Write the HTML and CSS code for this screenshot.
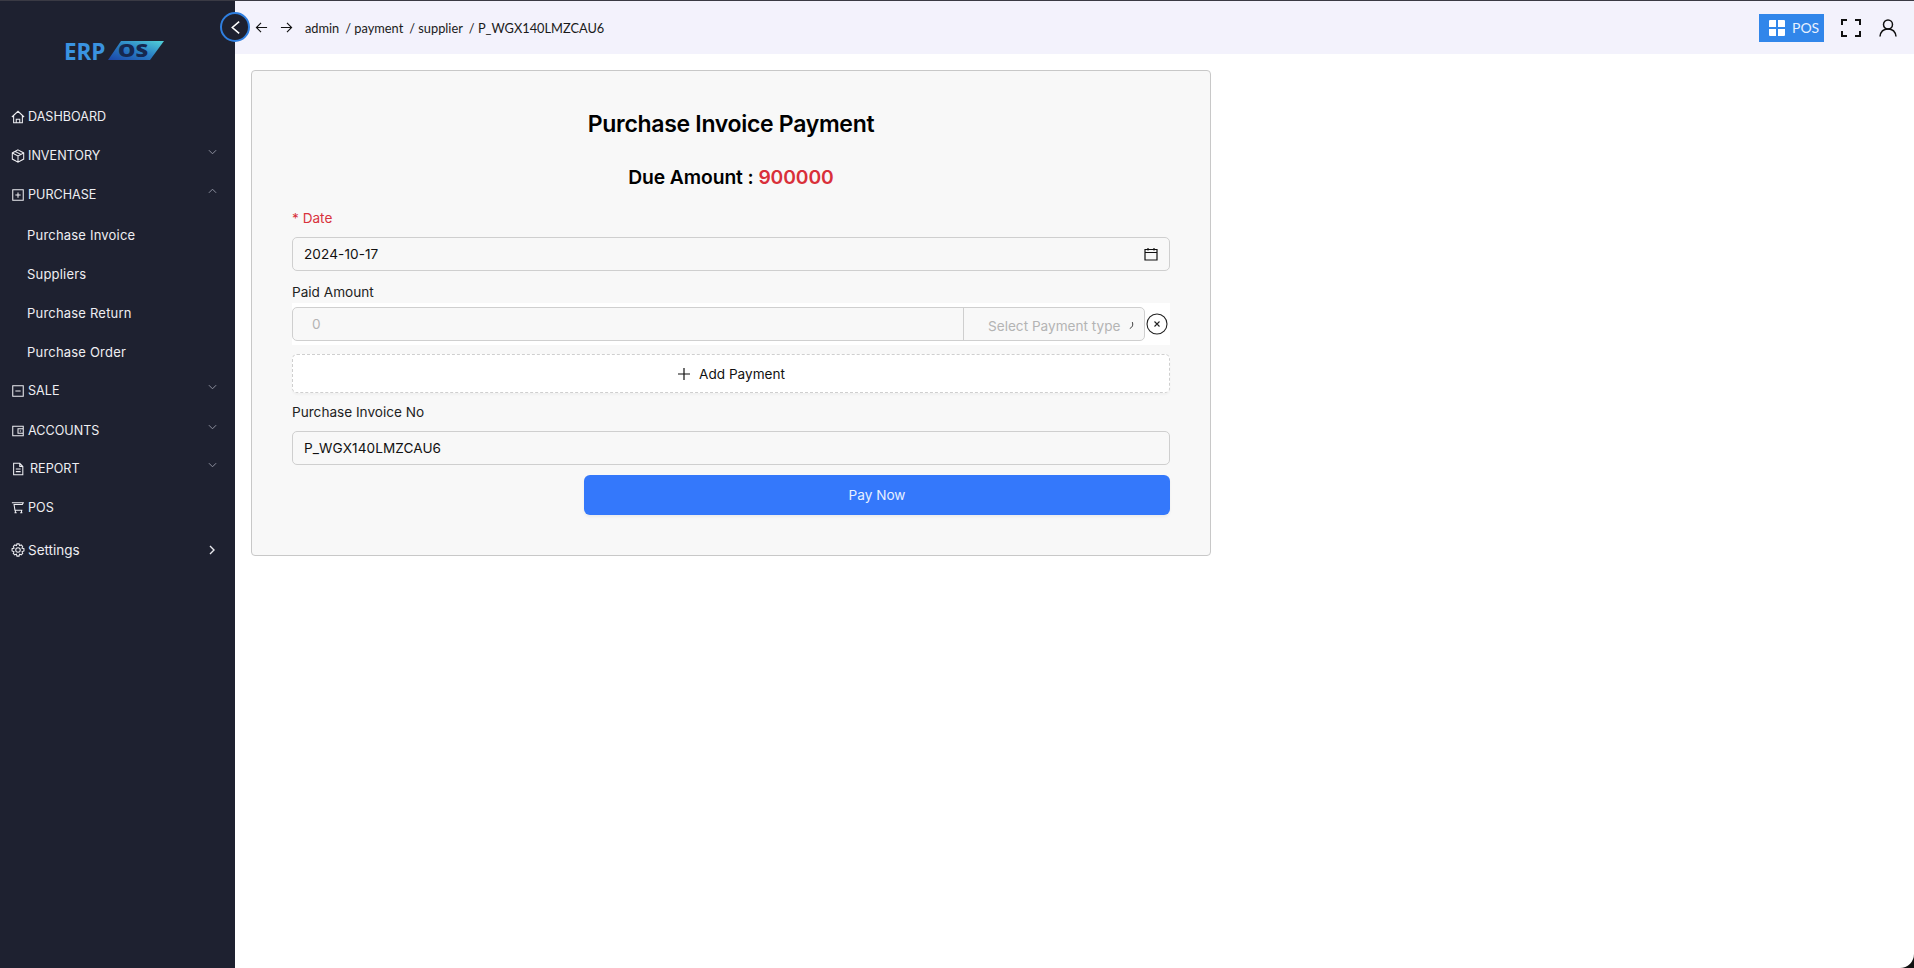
FILE: index.html
```html
<!DOCTYPE html>
<html lang="en">
<head>
<meta charset="utf-8">
<title>Purchase Invoice Payment</title>
<link rel="stylesheet" href="styles.css">
</head>
<body>
<div class="app">
  <aside class="sidebar">
    <div class="logo">
      <span class="logo-erp">ERP</span>
      <svg class="logo-os" width="58" height="22" viewBox="0 0 58 22">
        <defs><linearGradient id="lg" x1="0" x2="1" y1="1" y2="0"><stop offset="0" stop-color="#1a45a8"/><stop offset=".5" stop-color="#2a7fc4"/><stop offset="1" stop-color="#52d2d8"/></linearGradient></defs>
        <polygon points="14,1 57,1 43,20 1,20" fill="url(#lg)"/>
        <text x="11" y="17" class="logo-os-text" textLength="30" lengthAdjust="spacingAndGlyphs">OS</text>
      </svg>
    </div>
    <nav class="menu">
      <a class="item"><svg class="ic" viewBox="0 0 16 16"><path d="M1 8 8 1.5 15 8M3 6.5V14.5H13V6.5M6 14.5V10.5H10V14.5"/></svg><span>DASHBOARD</span></a>
      <a class="item"><svg class="ic" viewBox="0 0 16 16"><path d="M8 1 14.5 4.5V11.5L8 15 1.5 11.5V4.5ZM1.5 4.5 8 8 14.5 4.5M8 8V15M5 3 11 6"/></svg><span>INVENTORY</span><svg class="chev" viewBox="0 0 10 6"><path d="M1 1 5 5 9 1"/></svg></a>
      <a class="item"><svg class="ic" viewBox="0 0 16 16"><path d="M2 2H14V14H2ZM8 5V11M5 8H11"/></svg><span>PURCHASE</span><svg class="chev" viewBox="0 0 10 6"><path d="M1 5 5 1 9 5"/></svg></a>
      <a class="item sub first-sub">Purchase Invoice</a>
      <a class="item sub">Suppliers</a>
      <a class="item sub">Purchase Return</a>
      <a class="item sub">Purchase Order</a>
      <a class="item"><svg class="ic" viewBox="0 0 16 16"><path d="M2 2H14V14H2ZM5 8H11"/></svg><span>SALE</span><svg class="chev" viewBox="0 0 10 6"><path d="M1 1 5 5 9 1"/></svg></a>
      <a class="item accounts"><svg class="ic" viewBox="0 0 16 16"><path d="M2 2.5H14V13.5H2ZM8 5.5H14V10.5H8ZM10 8H11.5"/></svg><span>ACCOUNTS</span><svg class="chev" viewBox="0 0 10 6"><path d="M1 1 5 5 9 1"/></svg></a>
      <a class="item tight"><svg class="ic" viewBox="0 0 16 16"><path d="M3 1.5H10L13.5 5V14.5H3ZM10 1.5V5H13.5M5.5 8H11M5.5 11H11"/></svg><span class="indent">REPORT</span><svg class="chev" viewBox="0 0 10 6"><path d="M1 1 5 5 9 1"/></svg></a>
      <a class="item"><svg class="ic" viewBox="0 0 16 16"><path d="M1 2H14L13 4H3.5L4.5 10.5H13M3.5 4 4.5 10.5M5 10.5V13M12 10.5V13M4 13.5H6.5M10.5 13.5H13"/></svg><span>POS</span></a>
      <a class="item settings"><svg class="ic" viewBox="0 0 16 16"><path d="M6.8 1H9.2L9.7 3 11.6 2.2 13.3 3.9 12.5 5.8 14.8 6.5V9L12.6 9.9 13.4 11.8 11.7 13.5 9.8 12.7 9.2 15H6.8L6.2 12.7 4.3 13.5 2.6 11.8 3.4 9.9 1.2 9V6.5L3.5 5.8 2.7 3.9 4.4 2.2 6.3 3Z"/><circle cx="8" cy="8" r="2.6"/></svg><span>Settings</span><svg class="chev chev-right" viewBox="0 0 6 10"><path d="M1 1 5 5 1 9"/></svg></a>
    </nav>
  </aside>

  <div class="content">
    <button class="collapse" aria-label="Collapse"><svg viewBox="0 0 12 16" width="11" height="15"><path d="M10 1.5 2.5 8 10 14.5"/></svg></button>
    <header class="topbar">
      <div class="crumbs">
        <svg class="nav-arrow" viewBox="0 0 14 14"><path d="M13 7H1.5M6.5 2 1.5 7 6.5 12"/></svg>
        <svg class="nav-arrow" viewBox="0 0 14 14"><path d="M1 7H12.5M7.5 2 12.5 7 7.5 12"/></svg>
        <span class="crumb">admin</span>
        <span class="crumb">/ payment</span>
        <span class="crumb">/ supplier</span>
        <span class="crumb">/ P_WGX140LMZCAU6</span>
      </div>
      <div class="actions">
        <button class="pos-btn"><svg viewBox="0 0 16 16" width="16" height="16"><path d="M0 1a1 1 0 0 1 1-1H7V7H0ZM9 0H15a1 1 0 0 1 1 1V7H9ZM0 9H7V16H1a1 1 0 0 1-1-1ZM9 9H16V15a1 1 0 0 1-1 1H9Z"/></svg><span>POS</span></button>
        <svg class="full" viewBox="0 0 20 18"><path d="M1 6V1H6M14 1H19V6M19 12V17H14M6 17H1V12"/></svg>
        <svg class="user" viewBox="0 0 18 18"><circle cx="9" cy="5.5" r="4.5"/><path d="M1 17.5C1.5 13 4.5 10 9 10S16.5 13 17 17.5"/></svg>
      </div>
    </header>

    <main class="main">
      <section class="card">
        <h1 class="title">Purchase Invoice Payment</h1>
        <h2 class="due">Due Amount : <span class="due-val">900000</span></h2>
        <form class="form">
          <label class="label req">* Date</label>
          <div class="field date-field">
            <span>2024-10-17</span>
            <svg class="cal" viewBox="0 0 14 14"><path d="M1 2.5H13V13H1ZM1 5.5H13M4 1V3.5M10 1V3.5"/></svg>
          </div>
          <label class="label paid-label">Paid Amount</label>
          <div class="pay-row">
            <div class="pay-group">
              <span class="pay-input">0</span>
              <span class="pay-select"><span>Select Payment type</span><svg class="clip-arrow" viewBox="0 0 6 10"><path d="M4 1C5 4 4.5 7 1 8.5"/></svg></span>
            </div>
            <svg class="remove" viewBox="0 0 22 22"><circle cx="11" cy="11" r="10"/><path d="M8.5 8.5 13.5 13.5M13.5 8.5 8.5 13.5"/></svg>
          </div>
          <div class="add-btn"><svg viewBox="0 0 14 14" width="14" height="14"><path d="M7 1V13M1 7H13"/></svg><span>Add Payment</span></div>
          <label class="label inv-label">Purchase Invoice No</label>
          <div class="field">P_WGX140LMZCAU6</div>
          <div class="submit-row"><button type="button" class="pay-now">Pay Now</button></div>
        </form>
      </section>
    </main>
  </div>
</div>
</body>
</html>
```
FILE: styles.css
```css
* { box-sizing: border-box; }
html, body { margin: 0; height: 100%; }
body { font-family: Inter, "Liberation Sans", sans-serif; background: #111; color: #111; overflow: hidden; }
.app { display: flex; height: 968px; border-top: 1px solid #3a3a44; background: #fff; border-bottom-right-radius: 14px; overflow: hidden; }

.sidebar { width: 235px; flex: none; background: #1e2130; color: #eeeef2; }
.logo { height: 96px; padding: 36px 0 0 64px; display: flex; align-items: flex-start; gap: 2px; }
.logo-erp { font: 700 22.5px/30px "Open Sans", sans-serif; color: #3a93e0; letter-spacing: -.1px; }
.logo-os { margin-top: 3px; }
.logo-os-text { font: 800 17px "Open Sans", sans-serif; fill: #16284f; }
.menu { display: flex; flex-direction: column; }
.item { height: 39px; display: flex; align-items: center; padding: 0 18px 0 11px; font-size: 12.6px; }
.item.sub { padding-left: 27px; font-size: 13px; letter-spacing: .2px; }
.item.first-sub { margin-top: 1px; }
.item.accounts { margin-top: 1px; }
.item.tight { margin-top: -1px; }
.item.settings { margin-top: 3px; font-size: 13.5px; }
.ic { width: 14px; height: 14px; margin-right: 3px; flex: none; fill: none; stroke: #eeeef2; stroke-width: 1.2; }
.indent { margin-left: 2px; }
.chev { width: 9px; height: 6px; margin-left: auto; margin-top: -7px; fill: none; stroke: #8f92a0; stroke-width: 1.1; }
.chev-right { width: 6px; height: 10px; margin-top: 0; margin-right: 2px; stroke: #e9e9ee; stroke-width: 1.4; }

.content { flex: 1; min-width: 0; position: relative; display: flex; flex-direction: column; }
.collapse { position: absolute; left: -15px; top: 11px; width: 30px; height: 30px; border-radius: 50%; border: 2px solid #2f7fe0; background: #1e2130; padding: 0; display: flex; align-items: center; justify-content: center; z-index: 2; }
.collapse svg { fill: none; stroke: #fff; stroke-width: 1.7; }

.topbar { height: 53px; flex: none; background: #f3f2fc; display: flex; align-items: center; justify-content: space-between; padding: 0 17px 0 20px; font-family: Lato, sans-serif; font-size: 12.8px; }
.crumbs { display: flex; align-items: center; }
.nav-arrow { width: 13px; height: 13px; margin-right: 12px; fill: none; stroke: #111; stroke-width: 1.2; }
.crumb { margin-right: 6px; white-space: nowrap; color: #1a1a1a; }
.actions { display: flex; align-items: center; }
.pos-btn { width: 65px; height: 28px; border: 0; background: #3186ea; color: #e8f1ff; font: 14px Lato, sans-serif; display: flex; align-items: center; padding: 0 0 0 10px; gap: 7px; }
.pos-btn svg { fill: #fff; flex: none; }
.full { width: 20px; height: 18px; margin-left: 17px; fill: none; stroke: #111; stroke-width: 2; }
.user { width: 18px; height: 18px; margin-left: 18px; fill: none; stroke: #111; stroke-width: 1.5; }

.main { padding: 16px 0 0 16px; }
.card { width: 960px; height: 486px; background: #f8f8f8; border: 1px solid #c8c8c8; border-radius: 4px; padding: 39px 40px 0; }
.title { margin: 0; text-align: center; font-size: 23px; line-height: 28px; font-weight: 600; letter-spacing: -.3px; color: #000; }
.due { margin: 27px 0 0; text-align: center; font-size: 19.3px; line-height: 24px; font-weight: 600; letter-spacing: -.1px; color: #000; }
.due-val { color: #d9303a; }
.form { display: flex; flex-direction: column; margin-top: 19px; font-size: 13.6px; }
.label { font-size: 13.6px; line-height: 20px; color: #222; }
.req { color: #d8323c; }
.field { height: 34px; margin-top: 9px; border: 1px solid #cfcfcf; border-radius: 5px; background: #f8f8f8; display: flex; align-items: center; padding: 0 11px; color: #111; justify-content: space-between; letter-spacing: .08px; }
.cal { width: 14px; height: 14px; fill: none; stroke: #111; stroke-width: 1.2; }
.paid-label { margin-top: 11px; }
.pay-row { height: 42px; margin-top: 1px; background: #fff; display: flex; align-items: center; }
.pay-group { width: 853px; height: 34px; display: flex; border: 1px solid #cfcfcf; border-radius: 5px; background: #f8f8f8; color: #b4b4b4; }
.pay-input { width: 671px; padding-left: 19px; display: flex; align-items: center; border-right: 1px solid #cfcfcf; }
.pay-select { flex: 1; display: flex; align-items: center; padding-left: 24px; min-width: 0; margin-top: 3px; white-space: nowrap; }
.clip-arrow { margin-left: 9px; width: 5px; height: 9px; flex: none; fill: none; stroke: #333; stroke-width: 1.2; }
.remove { width: 22px; height: 22px; margin-left: 1px; fill: none; stroke: #222; stroke-width: 1.1; }
.add-btn { height: 39px; margin-top: 9px; background: #fff; border: 1px dashed #cfcfcf; border-radius: 5px; box-shadow: 0 2px 2px rgba(0,0,0,.03); display: flex; align-items: center; justify-content: center; gap: 8px; color: #111; }
.add-btn svg { fill: none; stroke: #111; stroke-width: 1.2; }
.inv-label { margin-top: 9px; }
.submit-row { display: flex; justify-content: flex-end; margin-top: 10px; }
.pay-now { width: 586px; height: 40px; border: 0; border-radius: 6px; background: #3478fb; color: #e8f0ff; font: 13.6px Inter, sans-serif; box-shadow: 0 2px 3px rgba(0,0,0,.05); }
```
